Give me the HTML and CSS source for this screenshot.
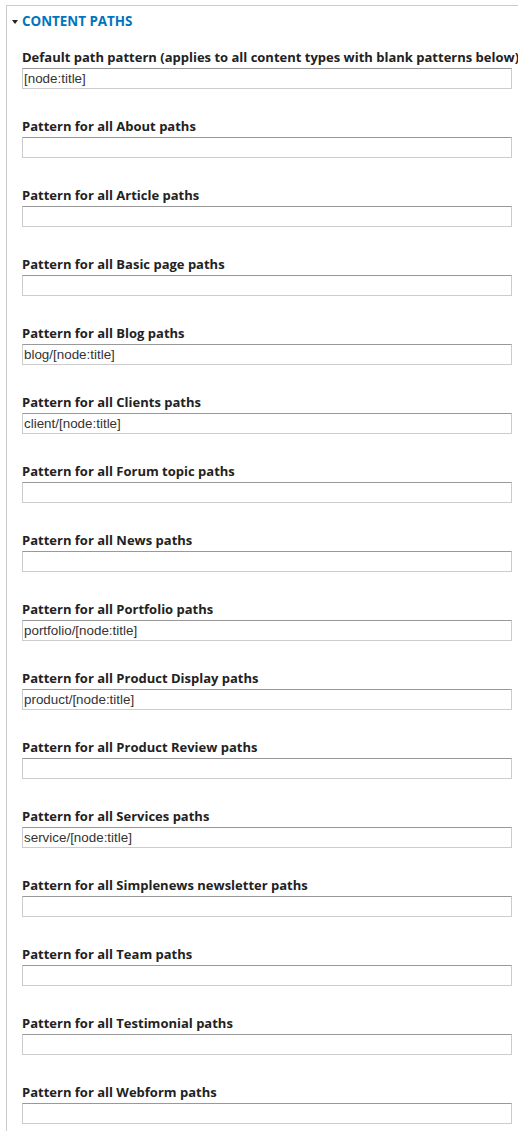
FILE: index.html
```html
<!DOCTYPE html>
<html>
<head>
<meta charset="utf-8">
<link rel="stylesheet" href="styles.css">
</head>
<body>
<div class="fieldset">
  <div class="legend"><span class="arrow"></span><span class="legend-text">Content paths</span></div>
  <div class="items">
    <div class="item"><label class="label">Default path pattern (applies to all content types with blank patterns below)</label><input class="field" type="text" value="[node:title]"></div>
    <div class="item"><label class="label">Pattern for all About paths</label><input class="field" type="text" value=""></div>
    <div class="item"><label class="label">Pattern for all Article paths</label><input class="field" type="text" value=""></div>
    <div class="item"><label class="label">Pattern for all Basic page paths</label><input class="field" type="text" value=""></div>
    <div class="item"><label class="label">Pattern for all Blog paths</label><input class="field" type="text" value="blog/[node:title]"></div>
    <div class="item"><label class="label">Pattern for all Clients paths</label><input class="field" type="text" value="client/[node:title]"></div>
    <div class="item"><label class="label">Pattern for all Forum topic paths</label><input class="field" type="text" value=""></div>
    <div class="item"><label class="label">Pattern for all News paths</label><input class="field" type="text" value=""></div>
    <div class="item"><label class="label">Pattern for all Portfolio paths</label><input class="field" type="text" value="portfolio/[node:title]"></div>
    <div class="item"><label class="label">Pattern for all Product Display paths</label><input class="field" type="text" value="product/[node:title]"></div>
    <div class="item"><label class="label">Pattern for all Product Review paths</label><input class="field" type="text" value=""></div>
    <div class="item"><label class="label">Pattern for all Services paths</label><input class="field" type="text" value="service/[node:title]"></div>
    <div class="item"><label class="label">Pattern for all Simplenews newsletter paths</label><input class="field" type="text" value=""></div>
    <div class="item"><label class="label">Pattern for all Team paths</label><input class="field" type="text" value=""></div>
    <div class="item"><label class="label">Pattern for all Testimonial paths</label><input class="field" type="text" value=""></div>
    <div class="item item-last"><label class="label">Pattern for all Webform paths</label><input class="field" type="text" value=""></div>
  </div>
</div>
</body>
</html>
```
FILE: styles.css
```css
html, body {
  margin: 0;
  padding: 0;
  background: #fff;
  overflow: hidden;
}
body {
  width: 518px;
  height: 1132px;
}
.fieldset {
  margin: 5px 0 0 6px;
  border-top: 1px solid #ccc;
  border-left: 1px solid #ccc;
  height: 1126px;
  box-sizing: border-box;
}
.legend {
  display: flex;
  align-items: center;
  padding: 6px 0 0 5px;
  height: 18px;
  line-height: 18px;
}
.arrow {
  width: 0;
  height: 0;
  border-left: 3.5px solid transparent;
  border-right: 3.5px solid transparent;
  border-top: 4px solid #222;
  margin-right: 4px;
  margin-top: 1px;
}
.legend-text {
  font-family: "Open Sans", sans-serif;
  font-weight: bold;
  font-size: 13.4px;
  text-transform: uppercase;
  color: #0074bd;
}
.items {
  padding: 18px 0 0 15px;
}
.item {
  margin-bottom: 28px;
}
.item-last {
  margin-bottom: 0;
}
.label {
  display: block;
  font-family: "Open Sans", sans-serif;
  font-weight: bold;
  font-size: 13px;
  line-height: 18px;
  color: #222;
  white-space: nowrap;
  margin-bottom: 2px;
}
.field {
  display: block;
  box-sizing: border-box;
  width: 490px;
  height: 21px;
  margin: 0;
  padding: 0 1px;
  border: 1px solid #ccc;
  border-top-color: #999;
  font-family: "Liberation Sans", Arial, sans-serif;
  font-size: 13.4px;
  color: #333;
  background: #fff;
  outline: none;
}
```
